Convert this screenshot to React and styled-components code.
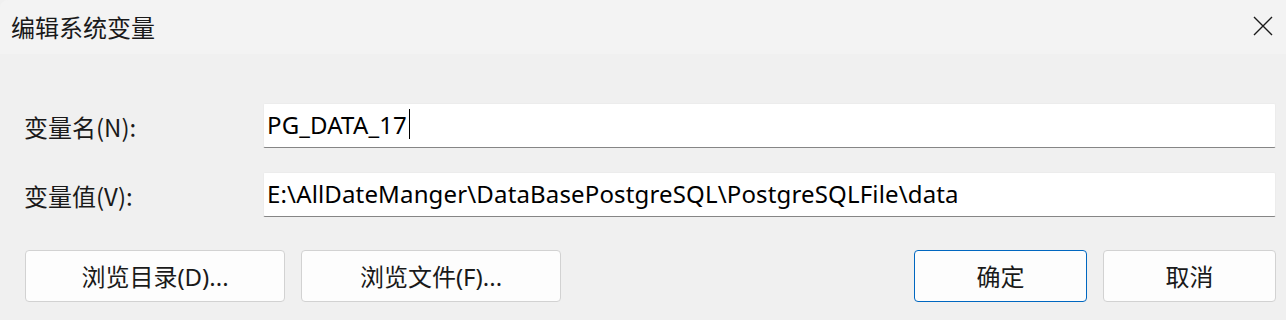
import React from "react";
import styled, { createGlobalStyle } from "styled-components";

const GlobalStyle = createGlobalStyle`
  html, body {
    margin: 0;
    padding: 0;
    background: #f0f0f0;
  }
  body {
    font-family: "Noto Sans", "Noto Sans CJK SC", sans-serif;
    color: #1a1a1a;
  }
`;

const App = () => {
  return (
    <Window>
      <GlobalStyle />
      <TitleBar>
        <Title>编辑系统变量</Title>
        <CloseButton aria-label="关闭">
          <svg width="20" height="20" viewBox="0 0 20 20">
            <path d="M1 1L19 19M19 1L1 19" stroke="#1a1a1a" strokeWidth="1.4" fill="none" />
          </svg>
        </CloseButton>
      </TitleBar>
      <Body>
        <FieldRow>
          <Label>变量名(N):</Label>
          <Field>
            PG_DATA_17
            <Caret />
          </Field>
        </FieldRow>
        <FieldRow>
          <Label>变量值(V):</Label>
          <Field>E:\AllDateManger\DataBasePostgreSQL\PostgreSQLFile\data</Field>
        </FieldRow>
        <ButtonRow>
          <Group>
            <Button $width={260}>浏览目录(D)...</Button>
            <Button $width={260}>浏览文件(F)...</Button>
          </Group>
          <Group>
            <Button $width={173} $primary>确定</Button>
            <Button $width={173}>取消</Button>
          </Group>
        </ButtonRow>
      </Body>
    </Window>
  );
};

export default App;

const Window = styled.div`
  width: 1286px;
  height: 320px;
  display: flex;
  flex-direction: column;
  background: #f0f0f0;
  border-top-left-radius: 8px;
  overflow: hidden;
`;

const TitleBar = styled.div`
  height: 54px;
  display: flex;
  align-items: center;
  justify-content: space-between;
  padding: 0 8px 0 11px;
  background: #f3f3f3;
  box-sizing: border-box;
`;

const Title = styled.span`
  font-family: "Noto Sans CJK SC", sans-serif;
  font-size: 24px;
  color: #1a1a1a;
  margin-top: -2px;
`;

const CloseButton = styled.div`
  width: 30px;
  height: 30px;
  display: flex;
  align-items: center;
  justify-content: center;
  margin-top: -2px;
`;

const Body = styled.div`
  flex: 1;
  display: flex;
  flex-direction: column;
  padding: 49px 10px 0 24px;
  gap: 24px;
`;

const FieldRow = styled.div`
  display: flex;
  align-items: center;
`;

const Label = styled.span`
  width: 239px;
  flex-shrink: 0;
  font-family: "Noto Sans CJK SC", sans-serif;
  font-size: 24px;
  padding-top: 2px;
`;

const Field = styled.div`
  flex: 1;
  height: 45px;
  box-sizing: border-box;
  display: flex;
  align-items: center;
  padding: 0 3px 3px;
  background: #ffffff;
  border: 1px solid #ececec;
  border-bottom: 1px solid #868686;
  border-radius: 2px;
  font-family: "Noto Sans", "Noto Sans CJK SC", sans-serif;
  font-size: 24px;
  letter-spacing: 0.15px;
  color: #000;
  white-space: pre;
`;

const Caret = styled.span`
  display: inline-block;
  width: 1px;
  height: 30px;
  margin-left: 2px;
  background: #000;
`;

const ButtonRow = styled.div`
  display: flex;
  justify-content: space-between;
  margin-top: 9px;
  padding-left: 1px;
`;

const Group = styled.div`
  display: flex;
  gap: 16px;
`;

const Button = styled.div`
  width: ${(p) => p.$width}px;
  height: 52px;
  box-sizing: border-box;
  display: flex;
  align-items: center;
  justify-content: center;
  padding-bottom: 2px;
  background: #fdfdfd;
  border: 1px solid ${(p) => (p.$primary ? "#0067c0" : "#d2d2d2")};
  border-radius: 4px;
  font-family: "Noto Sans", "Noto Sans CJK SC", sans-serif;
  font-size: 24px;
  color: #1a1a1a;
`;
